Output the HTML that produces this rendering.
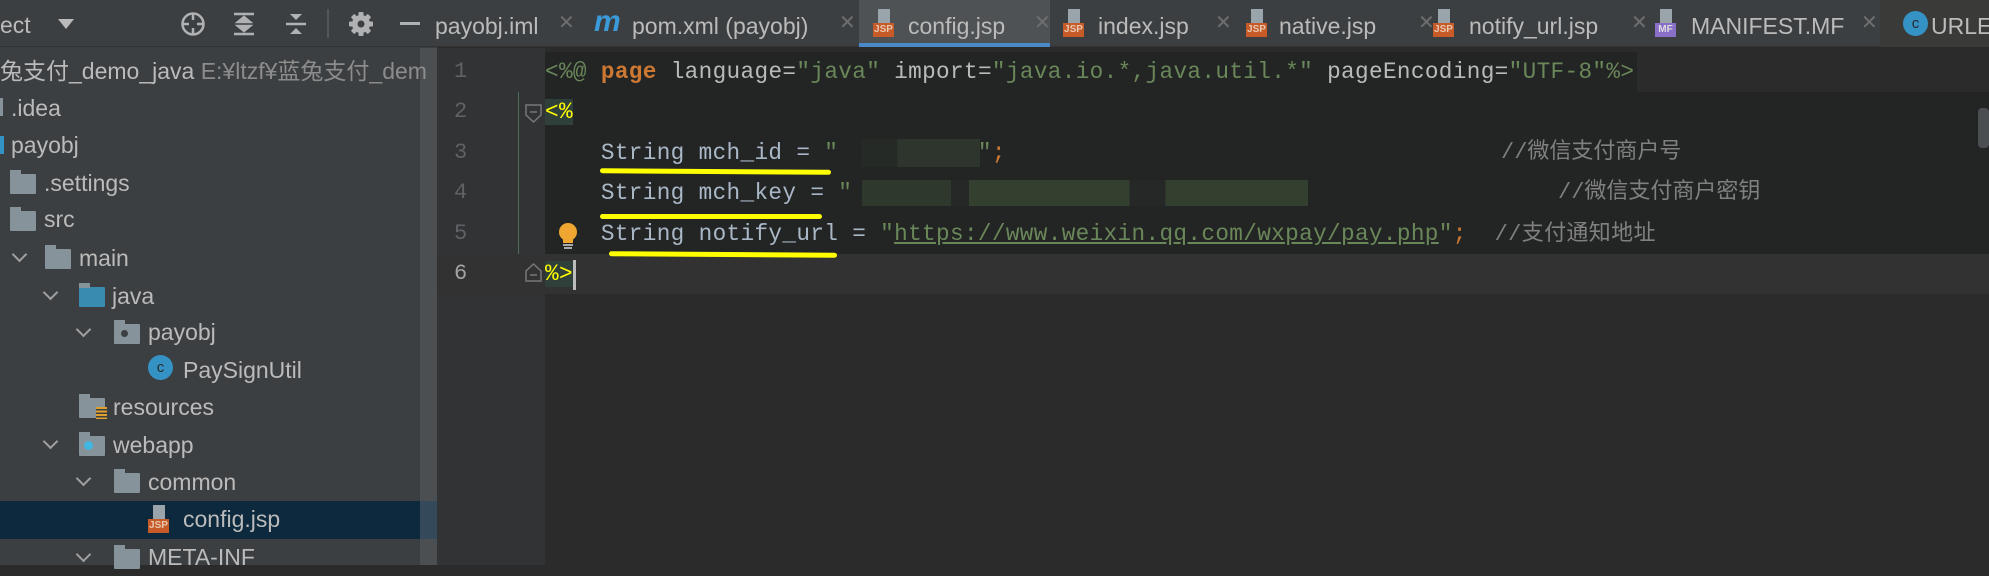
<!DOCTYPE html>
<html><head><meta charset="utf-8"><style>
*{margin:0;padding:0;box-sizing:border-box}
body{width:1989px;height:565px;overflow:hidden;background:#2b2b2b;font-family:"Liberation Sans","Noto Sans CJK SC",sans-serif;position:relative}
.a{position:absolute;white-space:nowrap}
#left{position:absolute;left:0;top:0;width:437px;height:565px;background:#3c3f41}
#lhead{position:absolute;left:0;top:0;width:437px;height:47px;background:#3c3f41;border-bottom:1px solid #323232}
.t{position:absolute;font-size:23px;color:#bbbbbb;line-height:37px;height:37px;white-space:nowrap}
.fold{position:absolute;width:26px;height:20px;background:#87939a;border-radius:1px}
.fold:before{content:"";position:absolute;left:0;top:-4px;width:11px;height:5px;background:#87939a}
.chev{position:absolute;width:11px;height:11px;border-right:2px solid #a0a0a0;border-bottom:2px solid #a0a0a0;transform:rotate(45deg)}
#tabs{position:absolute;left:437px;top:0;width:1552px;height:47px;background:#3c3f41;border-bottom:1px solid #323232}
.tab{position:absolute;top:3px;height:47px;font-size:23px;color:#bbbbbb;line-height:47px;white-space:nowrap}
.x{position:absolute;top:0;line-height:47px;font-size:20px;color:#6e6e6e}
.jsp{position:absolute;width:21px;height:30px;top:9px}
.jsp i{position:absolute;left:5px;top:0;width:12px;height:15px;background:#9aa4ab}
.jsp b{position:absolute;left:0;top:14px;width:21px;height:14px;background:#c75b27;color:#e8c7b3;font:bold 10px "Liberation Sans";line-height:14px;text-align:center}
#gut{position:absolute;left:437px;top:48px;width:108px;height:517px;background:#313335}
.ln{position:absolute;left:454px;font:22px "Liberation Mono",monospace;color:#606366;line-height:40px}
.code{position:absolute;left:545px;font:22.7px "Liberation Mono","Noto Sans CJK SC",monospace;letter-spacing:0.35px;color:#a9b7c6;line-height:40px;white-space:pre}
.s{color:#6a8759}.k{color:#cc7832}.c{color:#808080}.y{color:#ffff00;background:#2f3f3a}
.ul{position:absolute;height:5px;background:#ffff00;border-radius:3px}
</style></head><body>
<div id="left">
<div id="lhead">
<div class="a" style="left:0;top:2px;line-height:47px;font-size:23px;color:#bbb">ect</div>
<div class="a" style="left:58px;top:19px;border-left:8px solid transparent;border-right:8px solid transparent;border-top:10px solid #bbb"></div>
<svg class="a" style="left:180px;top:11px" width="26" height="26"><circle cx="13" cy="13" r="10.5" fill="none" stroke="#afb1b3" stroke-width="2.5"/><path d="M13 2v7M13 17v7M2 13h7M17 13h7" stroke="#afb1b3" stroke-width="2.5"/></svg>
<svg class="a" style="left:232px;top:12px" width="24" height="24"><path d="M2 2h20M2 22h20M6 10l6-5 6 5zM6 14l6 5 6-5z" stroke="#afb1b3" fill="#afb1b3" stroke-width="2.5"/></svg>
<svg class="a" style="left:284px;top:12px" width="24" height="24"><path d="M2 12h20" stroke="#afb1b3" stroke-width="2.5"/><path d="M6 2l6 6 6-6zM6 22l6-6 6 6z" fill="#afb1b3"/></svg>
<div class="a" style="left:327px;top:9px;width:2px;height:29px;background:#555"></div>
<svg class="a" style="left:348px;top:11px" width="26" height="26" viewBox="0 0 26 26"><g fill="#afb1b3"><rect x="10.5" y="1" width="5" height="24" rx="1"/><rect x="10.5" y="1" width="5" height="24" rx="1" transform="rotate(45 13 13)"/><rect x="10.5" y="1" width="5" height="24" rx="1" transform="rotate(90 13 13)"/><rect x="10.5" y="1" width="5" height="24" rx="1" transform="rotate(135 13 13)"/><circle cx="13" cy="13" r="9"/></g><circle cx="13" cy="13" r="3.5" fill="#3c3f41"/></svg>
<div class="a" style="left:400px;top:22px;width:20px;height:3px;background:#afb1b3"></div>
</div>
<div class="a" style="left:420px;top:48px;width:17px;height:517px;background:#4b4f51"></div>
<div class="a" style="left:0;top:501px;width:420px;height:38px;background:#0d293e"></div>
<div class="a" style="left:420px;top:501px;width:17px;height:38px;background:#34495a"></div>
<div class="t" style="left:0;top:53px;color:#bbb">兔支付_demo_java <span style="color:#8c8c8c">E:¥ltzf¥蓝兔支付_dem</span></div>
<div class="a" style="left:0;top:98px;width:3px;height:18px;background:#87939a"></div>
<div class="t" style="left:11px;top:90px">.idea</div>
<div class="a" style="left:0;top:136px;width:4px;height:18px;background:#3592c4"></div>
<div class="t" style="left:11px;top:127px">payobj</div>
<div class="fold" style="left:10px;top:174px"></div><div class="t" style="left:44px;top:165px">.settings</div>
<div class="fold" style="left:10px;top:211px"></div><div class="t" style="left:44px;top:201px">src</div>
<div class="chev" style="left:14px;top:249px"></div><div class="fold" style="left:45px;top:249px"></div><div class="t" style="left:79px;top:240px">main</div>
<div class="chev" style="left:45px;top:287px"></div><div class="fold" style="left:79px;top:287px;background:#3a8bb0"></div><div class="t" style="left:112px;top:278px">java</div>
<div class="chev" style="left:78px;top:324px"></div><div class="fold" style="left:114px;top:324px"></div><div class="a" style="left:121px;top:330px;width:7px;height:7px;border-radius:50%;background:#3c3f41"></div><div class="t" style="left:148px;top:314px">payobj</div>
<div class="a" style="left:148px;top:355px;width:25px;height:25px;border-radius:50%;background:#3592c4;color:#2b2b2b;font-size:15px;text-align:center;line-height:25px">c</div><div class="t" style="left:183px;top:352px">PaySignUtil</div>
<div class="fold" style="left:79px;top:398px"></div><div class="a" style="left:96px;top:407px;width:11px;height:12px;background:repeating-linear-gradient(#e0a030 0 2px,#3c3f41 2px 3.5px)"></div><div class="t" style="left:113px;top:389px">resources</div>
<div class="chev" style="left:45px;top:436px"></div><div class="fold" style="left:79px;top:436px"></div><div class="a" style="left:84px;top:441px;width:9px;height:9px;border-radius:50%;background:#40b6e0"></div><div class="t" style="left:113px;top:427px">webapp</div>
<div class="chev" style="left:78px;top:473px"></div><div class="fold" style="left:114px;top:473px"></div><div class="t" style="left:148px;top:464px">common</div>
<div class="jsp" style="left:148px;top:505px"><i></i><b>JSP</b></div><div class="t" style="left:183px;top:501px">config.jsp</div>
<div class="chev" style="left:78px;top:549px"></div><div class="fold" style="left:114px;top:549px"></div><div class="t" style="left:148px;top:539px">META-INF</div>
</div>
<div id="tabs">
<div class="tab" style="left:-2px">payobj.iml</div><div class="x" style="left:121px">✕</div>
<div class="tab" style="left:157px;top:0;color:#3b9ad9;font:italic bold 30px 'Liberation Sans';line-height:44px">m</div><div class="tab" style="left:195px">pom.xml (payobj)</div><div class="x" style="left:402px">✕</div>
<div class="a" style="left:422px;top:0;width:191px;height:47px;background:#4e5254;border-bottom:4px solid #4a88c7"></div>
<div class="jsp" style="left:436px"><i></i><b>JSP</b></div><div class="tab" style="left:471px">config.jsp</div><div class="x" style="left:597px">✕</div>
<div class="jsp" style="left:626px"><i></i><b>JSP</b></div><div class="tab" style="left:661px">index.jsp</div><div class="x" style="left:778px">✕</div>
<div class="jsp" style="left:809px"><i></i><b>JSP</b></div><div class="tab" style="left:842px">native.jsp</div><div class="x" style="left:981px">✕</div>
<div class="jsp" style="left:996px"><i></i><b>JSP</b></div><div class="tab" style="left:1032px">notify_url.jsp</div><div class="x" style="left:1194px">✕</div>
<div class="jsp" style="left:1218px"><i></i><b style="background:#8a6fc8;color:#ddd">MF</b></div><div class="tab" style="left:1254px">MANIFEST.MF</div><div class="x" style="left:1424px">✕</div>
<div class="a" style="left:1443px;top:0;width:109px;height:47px;background:#3a3a38"></div>
<div class="a" style="left:1466px;top:11px;width:25px;height:25px;border-radius:50%;background:#3592c4;color:#2b2b2b;font-size:15px;text-align:center;line-height:25px">c</div><div class="tab" style="left:1494px">URLE</div>
</div>
<div id="gut"></div>
<div class="a" style="left:518px;top:92px;width:1px;height:200px;background:#4b6b5b"></div>
<div class="a" style="left:545px;top:52px;width:1092px;height:40px;background:#232525"></div>
<div class="a" style="left:545px;top:92px;width:1444px;height:162px;background:#232525"></div>
<div class="a" style="left:437px;top:254px;width:1552px;height:40px;background:#323232"></div>
<div class="a" style="left:1978px;top:108px;width:11px;height:40px;background:#4b4f51;border-radius:4px"></div>
<div class="ln" style="top:52px">1</div><div class="ln" style="top:92px">2</div><div class="ln" style="top:133px">3</div><div class="ln" style="top:173px">4</div><div class="ln" style="top:214px">5</div><div class="ln" style="top:254px;color:#a4a3a3">6</div>
<svg class="a" style="left:525px;top:104px" width="17" height="20"><path d="M1 1h15v10l-7.5 7L1 11z" fill="none" stroke="#777" stroke-width="1.5"/><path d="M5 8h7" stroke="#777" stroke-width="1.5"/></svg>
<svg class="a" style="left:525px;top:262px" width="17" height="20"><path d="M1 19h15V9L8.5 2 1 9z" fill="none" stroke="#777" stroke-width="1.5"/><path d="M5 13h7" stroke="#777" stroke-width="1.5"/></svg>
<svg class="a" style="left:557px;top:222px" width="22" height="30"><circle cx="11" cy="10" r="9" fill="#f0a732"/><rect x="6" y="17" width="10" height="4" fill="#f0a732"/><path d="M6 23h10M7 26h8" stroke="#aaa" stroke-width="2"/></svg>
<div class="code" style="top:52px"><span class="s">&lt;%@</span> <b class="k">page</b> <span style="color:#bababa">language=</span><span class="s">"java"</span> <span style="color:#bababa">import=</span><span class="s">"java.io.*,java.util.*"</span> <span style="color:#bababa">pageEncoding=</span><span class="s">"UTF-8"</span><span class="s">%&gt;</span></div>
<div class="code" style="top:92px"><span class="y">&lt;%</span></div>
<div class="code" style="top:133px">    String mch_id = <span class="s">"          "</span><span class="k">;</span></div>
<div class="a" style="left:862px;top:139px;width:118px;height:28px;background:linear-gradient(90deg,#262a27 0 30%,#2e352d 30% 100%)"></div>
<div class="a" style="left:1501px;top:133px;font:22px 'Liberation Mono','Noto Sans CJK SC',monospace;line-height:40px;color:#808080">//微信支付商户号</div>
<div class="code" style="top:173px">    String mch_key = <span class="s">"                          "</span><span class="k">;</span></div>
<div class="a" style="left:862px;top:180px;width:446px;height:26px;background:linear-gradient(90deg,#2e382d 0 20%,#262827 20% 24%,#34402f 24% 60%,#262827 60% 68%,#34402f 68%)"></div>
<div class="a" style="left:1558px;top:173px;font:22px 'Liberation Mono','Noto Sans CJK SC',monospace;line-height:40px;color:#808080">//微信支付商户密钥</div>
<div class="code" style="top:214px">    String notify_url = <span class="s">"<u>https://www.weixin.qq.com/wxpay/pay.php</u>"</span><span class="k">;</span>  <span class="c" style="font-size:22px">//支付通知地址</span></div>
<div class="code" style="top:254px"><span class="y">%&gt;</span></div>
<div class="a" style="left:573px;top:260px;width:3px;height:30px;background:#bbb"></div>
<div class="ul" style="left:600px;top:169px;width:231px;transform:rotate(0.4deg)"></div>
<div class="ul" style="left:600px;top:214px;width:222px"></div>
<div class="ul" style="left:609px;top:252px;width:228px;transform:rotate(0.4deg)"></div>
</body></html>
